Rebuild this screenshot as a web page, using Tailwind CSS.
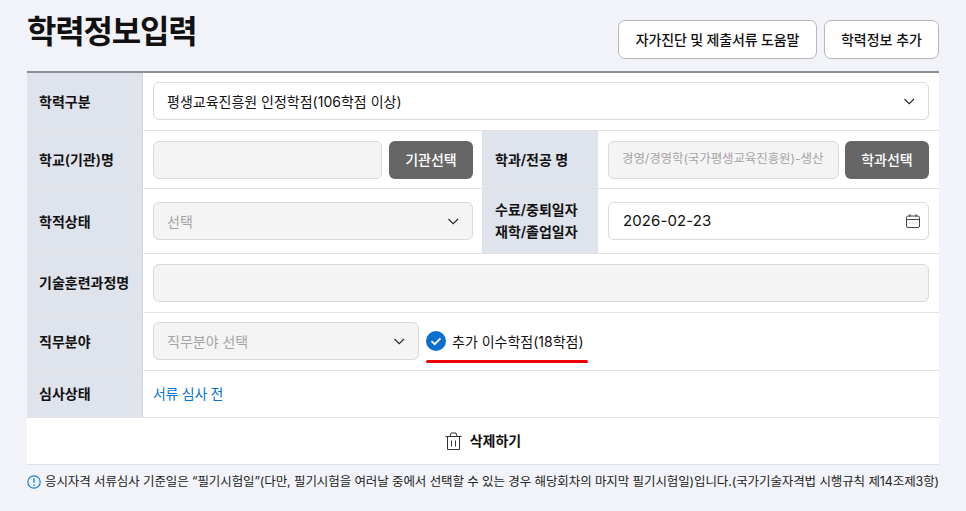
<!DOCTYPE html>
<html lang="ko">

<head>
    <meta charset="UTF-8">
    <meta name="viewport" content="width=device-width, initial-scale=1.0">
    <title>학력정보입력</title>
    <script src="https://cdn.jsdelivr.net/npm/@tailwindcss/browser@4"></script>
</head>

<body class="bg-[#f1f3f8] font-['Inter','Noto_Sans_CJK_KR',sans-serif] text-[#111] h-[511px] overflow-hidden">
    <main class="mx-[27px] w-[912px]">
        <!-- title -->
        <header class="flex items-start justify-between h-[71px]">
            <h1 class="text-[32px] leading-[40px] mt-[12px] font-bold tracking-[-1.2px]">학력정보입력</h1>
            <div class="flex gap-[7px] mt-[20px]">
                <button class="h-[39px] w-[199px] bg-white border border-[#b5b7bc] rounded-[7px] text-[14px] font-medium tracking-[-0.15px]">자가진단 및 제출서류 도움말</button>
                <button class="h-[39px] w-[115px] bg-white border border-[#b5b7bc] rounded-[7px] text-[14px] font-medium">학력정보 추가</button>
            </div>
        </header>

        <!-- form table -->
        <section class="bg-white border-t-2 border-[#8c8e94] text-[14px]">
            <div class="flex h-[58px] border-b border-[#dfe1e5]">
                <div class="w-[116px] shrink-0 bg-[#dee3ec] border-r border-[#d0d3d9] pl-[12px] pb-[1px] flex items-center font-semibold">학력구분</div>
                <div class="flex-1 px-[10px] pb-[1px] flex items-center">
                    <div class="w-full h-[38px] border border-[#d9dadd] rounded-[6px] bg-white px-[13px] flex items-center justify-between">
                        <span>평생교육진흥원 인정학점(106학점 이상)</span>
                        <svg class="w-[12px] h-[12px]" viewBox="0 0 12 12" fill="none" stroke="#222" stroke-width="1.1"><path d="M1.5 4l4.7 4.7L11 4" /></svg>
                    </div>
                </div>
            </div>

            <div class="flex h-[58px] border-b border-[#dfe1e5]">
                <div class="w-[116px] shrink-0 bg-[#dee3ec] border-r border-[#d0d3d9] pl-[12px] flex items-center font-semibold">학교(기관)명</div>
                <div class="w-[339px] shrink-0 pl-[10px] pr-[9px] flex items-center gap-[7px]">
                    <div class="flex-1 h-[38px] border border-[#d9dadd] rounded-[6px] bg-[#f4f4f5]"></div>
                    <button class="w-[84px] h-[38px] rounded-[6px] bg-[#666] text-white text-[14px] font-medium">기관선택</button>
                </div>
                <div class="w-[116px] shrink-0 bg-[#dee3ec] border-l border-[#dfe1e5] pl-[12px] flex items-center font-semibold">학과/전공 명</div>
                <div class="flex-1 min-w-0 px-[10px] flex items-center gap-[6px]">
                    <div class="flex-1 min-w-0 h-[38px] border border-[#d9dadd] rounded-[6px] bg-[#f4f4f5] px-[13px] flex items-center text-[#a4a4a6] text-[12.5px] tracking-[-0.1px] whitespace-nowrap overflow-hidden">경영/경영학(국가평생교육진흥원)-생산</div>
                    <button class="w-[84px] h-[38px] rounded-[6px] bg-[#666] text-white text-[14px] font-medium">학과선택</button>
                </div>
            </div>

            <div class="flex h-[65px] border-b border-[#dfe1e5]">
                <div class="w-[116px] shrink-0 bg-[#dee3ec] border-r border-[#d0d3d9] pl-[12px] flex items-center font-semibold">학적상태</div>
                <div class="w-[339px] shrink-0 pl-[10px] pr-[9px] flex items-center">
                    <div class="w-full h-[38px] border border-[#d9dadd] rounded-[6px] bg-[#f4f4f5] px-[13px] flex items-center justify-between text-[#a4a4a6]">
                        <span>선택</span>
                        <svg class="w-[12px] h-[12px]" viewBox="0 0 12 12" fill="none" stroke="#222" stroke-width="1.1"><path d="M1.5 4l4.7 4.7L11 4" /></svg>
                    </div>
                </div>
                <div class="w-[116px] shrink-0 bg-[#dee3ec] border-l border-[#dfe1e5] pl-[12px] flex items-center font-semibold leading-[22px]">수료/중퇴일자<br>재학/졸업일자</div>
                <div class="flex-1 min-w-0 px-[10px] flex items-center">
                    <div class="w-full h-[38px] border border-[#d9dadd] rounded-[6px] bg-white pl-[14px] pr-[8px] flex items-center justify-between">
                        <span class="text-[15px] tracking-[0.1px] pt-[1px]">2026-02-23</span>
                        <svg class="w-[14px] h-[14px]" viewBox="0 0 14 14" fill="none" stroke="#444" stroke-width="1"><rect x="0.5" y="2" width="13" height="11.5" rx="1.5" /><path d="M0.5 5.5h13M4 0v3M10 0v3" /><path d="M3.5 9h1M6.5 9h1M9.5 9h1" stroke="#999" /></svg>
                    </div>
                </div>
            </div>

            <div class="flex h-[59px] border-b border-[#dfe1e5]">
                <div class="w-[116px] shrink-0 bg-[#dee3ec] border-r border-[#d0d3d9] pl-[12px] pb-[1px] flex items-center font-semibold whitespace-nowrap">기술훈련과정명</div>
                <div class="flex-1 px-[10px] flex items-center">
                    <div class="w-full h-[38px] border border-[#d9dadd] rounded-[6px] bg-[#f4f4f5]"></div>
                </div>
            </div>

            <div class="flex h-[58px] border-b border-[#dfe1e5]">
                <div class="w-[116px] shrink-0 bg-[#dee3ec] border-r border-[#d0d3d9] pl-[12px] pb-[1px] flex items-center font-semibold">직무분야</div>
                <div class="flex-1 px-[10px] pb-[1px] flex items-center">
                    <div class="w-[266px] h-[38px] border border-[#d9dadd] rounded-[6px] bg-[#f4f4f5] px-[13px] flex items-center justify-between text-[#a4a4a6]">
                        <span>직무분야 선택</span>
                        <svg class="w-[12px] h-[12px]" viewBox="0 0 12 12" fill="none" stroke="#222" stroke-width="1.1"><path d="M1.5 4l4.7 4.7L11 4" /></svg>
                    </div>
                    <div class="relative flex items-center gap-[6px] ml-[7px]">
                        <svg class="w-[20px] h-[20px]" viewBox="0 0 20 20"><circle cx="10" cy="10" r="10" fill="#0b6fd1" /><path d="M5.5 10.2l3.2 3 5.8-5.8" fill="none" stroke="#fff" stroke-width="1.8" /></svg>
                        <span>추가 이수학점(18학점)</span>
                        <span class="absolute left-0 top-[29px] w-[162px] h-[3px] rounded-full bg-[#f00000]"></span>
                    </div>
                </div>
            </div>

            <div class="flex h-[47px] border-b border-[#dfe1e5]">
                <div class="w-[116px] shrink-0 bg-[#dee3ec] border-r border-[#d0d3d9] pl-[12px] pb-[1px] flex items-center font-semibold">심사상태</div>
                <div class="flex-1 px-[10px] pb-[1px] flex items-center text-[#0b74cf] tracking-[-0.3px]">서류 심사 전</div>
            </div>

            <div class="h-[47px] pb-[1px] flex items-center justify-center gap-[8px] border-b border-[#dfe1e5] font-semibold">
                <svg class="w-[17px] h-[18px]" viewBox="0 0 17 18" fill="none" stroke="#333" stroke-width="1"><path d="M0.5 4.5h16M5 4.5l1-3.5h5l1 3.5M2.5 4.5v13h12v-13M6.5 8.5v6M10.5 8.5v6" /></svg>
                <span>삭제하기</span>
            </div>
        </section>

        <!-- notice -->
        <p class="flex items-center gap-[4px] mt-[8px] text-[12.5px] tracking-[-0.1px] whitespace-nowrap text-[#222]">
            <svg class="w-[14px] h-[14px] shrink-0" viewBox="0 0 14 14" fill="none"><circle cx="7" cy="7" r="6.2" stroke="#1b7fd6" stroke-width="1.2" /><path d="M7 3.2v4.6M7 9.3v1.4" stroke="#1b7fd6" stroke-width="1.4" /></svg>
            <span>응시자격 서류심사 기준일은 “필기시험일”(다만, 필기시험을 여러날 중에서 선택할 수 있는 경우 해당회차의 마지막 필기시험일)입니다.(국가기술자격법 시행규칙 제14조제3항)</span>
        </p>
    </main>
</body>

</html>
